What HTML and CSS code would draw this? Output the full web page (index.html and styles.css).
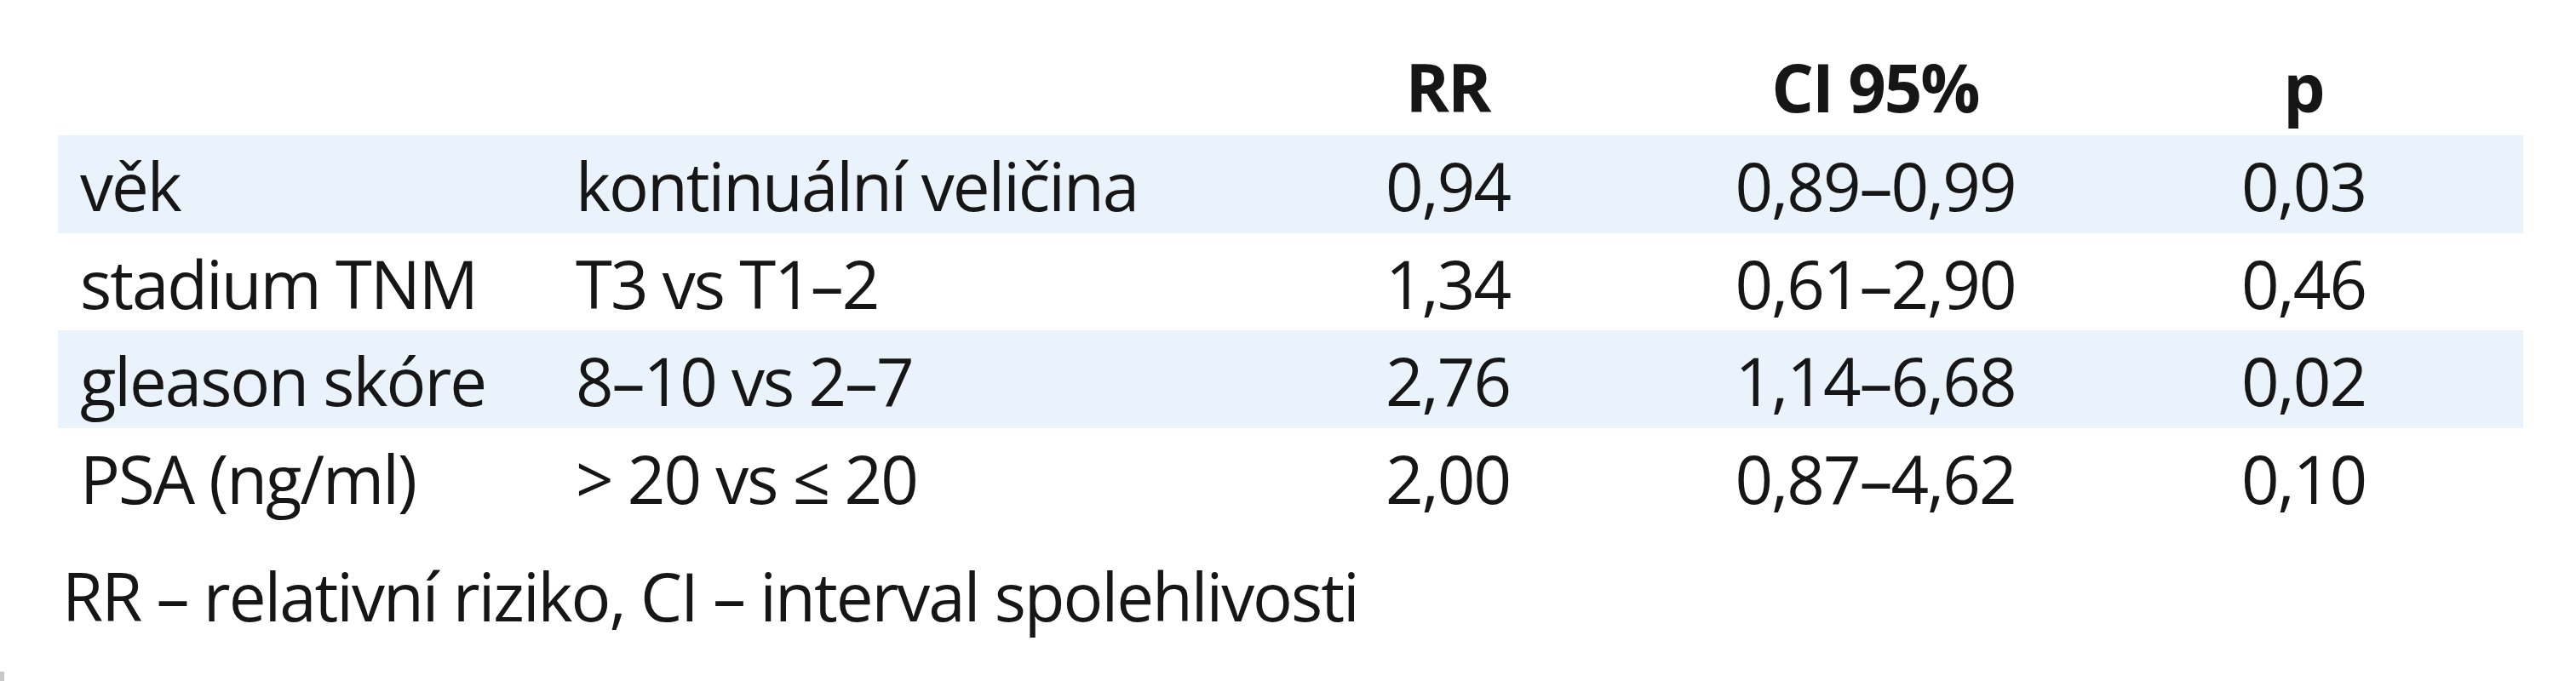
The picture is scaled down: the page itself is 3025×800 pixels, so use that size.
FILE: index.html
```html
<!DOCTYPE html>
<html lang="cs">
<head>
<meta charset="utf-8">
<title>Tabulka RR</title>
<link rel="stylesheet" href="styles.css">
</head>
<body>
<div class="page">
  <div class="table">
    <div class="row head">
      <div class="cell"></div>
      <div class="cell"></div>
      <div class="cell num">RR</div>
      <div class="cell num">CI 95%</div>
      <div class="cell num">p</div>
    </div>
    <div class="row band">
      <div class="cell">věk</div>
      <div class="cell">kontinuální veličina</div>
      <div class="cell num">0,94</div>
      <div class="cell num">0,89–0,99</div>
      <div class="cell num">0,03</div>
    </div>
    <div class="row">
      <div class="cell">stadium TNM</div>
      <div class="cell">T3 vs T1–2</div>
      <div class="cell num">1,34</div>
      <div class="cell num">0,61–2,90</div>
      <div class="cell num">0,46</div>
    </div>
    <div class="row band">
      <div class="cell">gleason skóre</div>
      <div class="cell">8–10 vs 2–7</div>
      <div class="cell num">2,76</div>
      <div class="cell num">1,14–6,68</div>
      <div class="cell num">0,02</div>
    </div>
    <div class="row">
      <div class="cell">PSA (ng/ml)</div>
      <div class="cell">&gt; 20 vs ≤ 20</div>
      <div class="cell num">2,00</div>
      <div class="cell num">0,87–4,62</div>
      <div class="cell num">0,10</div>
    </div>
    <p class="note">RR – relativní riziko, CI – interval spolehlivosti</p>
  </div>
  <span class="edge-mark"></span>
</div>
</body>
</html>
```

FILE: styles.css
```css
html, body {
  margin: 0;
  padding: 0;
  background: #ffffff;
}

.page {
  position: relative;
  width: 3025px;
  height: 800px;
  overflow: hidden;
  font-family: "Open Sans", "Noto Sans", sans-serif;
  font-size: 78px;
  letter-spacing: -2px;
  color: #161616;
}

.table {
  margin-left: 68px;
  width: 2895px;
}

.row {
  display: grid;
  grid-template-columns: 582px 800px 500px 504px 502px;
  padding-right: 7px;
  height: 114.5px;
  line-height: 114.5px;
  white-space: nowrap;
}

.row.head {
  height: 159px;
  line-height: 106px;
  padding-top: 49px;
  box-sizing: border-box;
  font-weight: 700;
}

.row.band {
  background: #eaf2fb;
}

.cell {
  padding-left: 26px;
  padding-top: 2px;
}

.cell.num {
  padding-left: 0;
  text-align: center;
}

.row.head .cell {
  padding-top: 0;
}

.note {
  margin: 30px 0 0 5px;
  line-height: 106px;
  white-space: nowrap;
}

.edge-mark {
  position: absolute;
  left: 0;
  top: 789px;
  width: 5px;
  height: 11px;
  background: #c8c8c8;
}
```
